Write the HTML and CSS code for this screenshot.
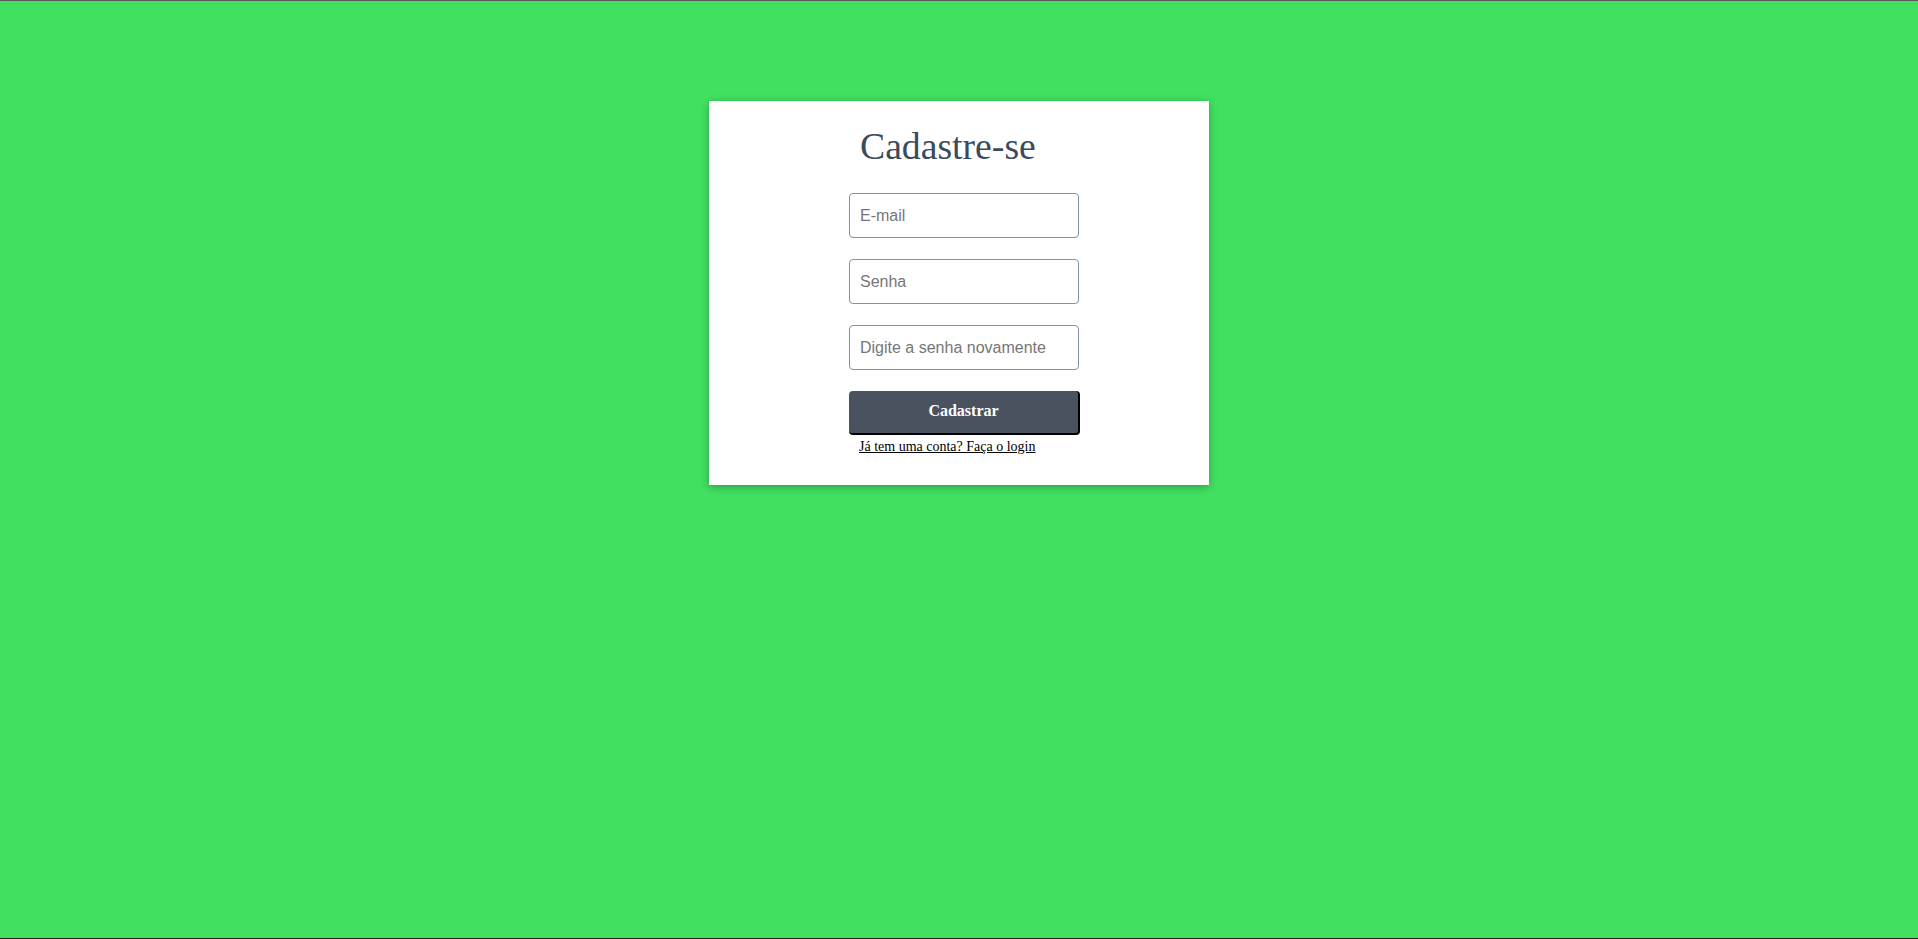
FILE: index.html
```html
<!DOCTYPE html>
<html lang="pt-BR">
<head>
<meta charset="utf-8">
<title>Cadastre-se</title>
<link rel="stylesheet" href="styles.css">
</head>
<body>
<main class="page">
  <section class="card">
    <form class="form">
      <h1 class="title">Cadastre-se</h1>
      <input class="field" type="email" placeholder="E-mail">
      <input class="field" type="password" placeholder="Senha">
      <input class="field" type="password" placeholder="Digite a senha novamente">
      <button class="submit" type="button">Cadastrar</button>
      <a class="login-link" href="#">Já tem uma conta? Faça o login</a>
    </form>
  </section>
</main>
<div class="taskbar"></div>
</body>
</html>
```
FILE: styles.css
```css
* { box-sizing: border-box; }
html, body { margin: 0; padding: 0; }
body {
  height: 939px;
  background: #41e061;
  border-top: 1px solid #5a5a5a;
  display: flex;
  flex-direction: column;
  overflow: hidden;
}
.page {
  flex: 1;
  display: flex;
  justify-content: flex-start;
  padding: 100px 0 0 709px;
}
.card {
  width: 500px;
  height: 384px;
  background: #ffffff;
  box-shadow: 0 2px 8px rgba(0, 0, 0, 0.3);
  padding: 23px 129px 0 140px;
}
.form {
  display: flex;
  flex-direction: column;
  width: 231px;
}
.title {
  margin: 0 0 25px 0;
  padding-left: 11px;
  font-family: "Liberation Serif", "Times New Roman", serif;
  font-weight: normal;
  font-size: 37.7px;
  line-height: 44px;
  color: #3c4b5c;
}
.field {
  width: 230px;
  height: 45px;
  margin: 0 0 21px 0;
  padding: 0 10px;
  border: 1px solid #8391a8;
  border-radius: 4px;
  font-family: "Liberation Sans", Arial, sans-serif;
  font-size: 16px;
  color: #333;
  background: #fff;
  outline: none;
}
.field::placeholder { color: #767676; }
.submit {
  width: 231px;
  height: 44px;
  margin: 0;
  padding: 0 0 2px 0;
  background: #4a525f;
  color: #ffffff;
  border: 0;
  border-right: 2px solid #000;
  border-bottom: 2px solid #000;
  border-radius: 4px;
  font-family: "Liberation Serif", "Times New Roman", serif;
  font-weight: bold;
  font-size: 16px;
}
.login-link {
  margin-top: 4px;
  padding-left: 10px;
  font-family: "Liberation Serif", "Times New Roman", serif;
  font-size: 14px;
  line-height: 16px;
  color: #000;
}
.taskbar {
  height: 1px;
  background: #1f1f1f;
}
```
